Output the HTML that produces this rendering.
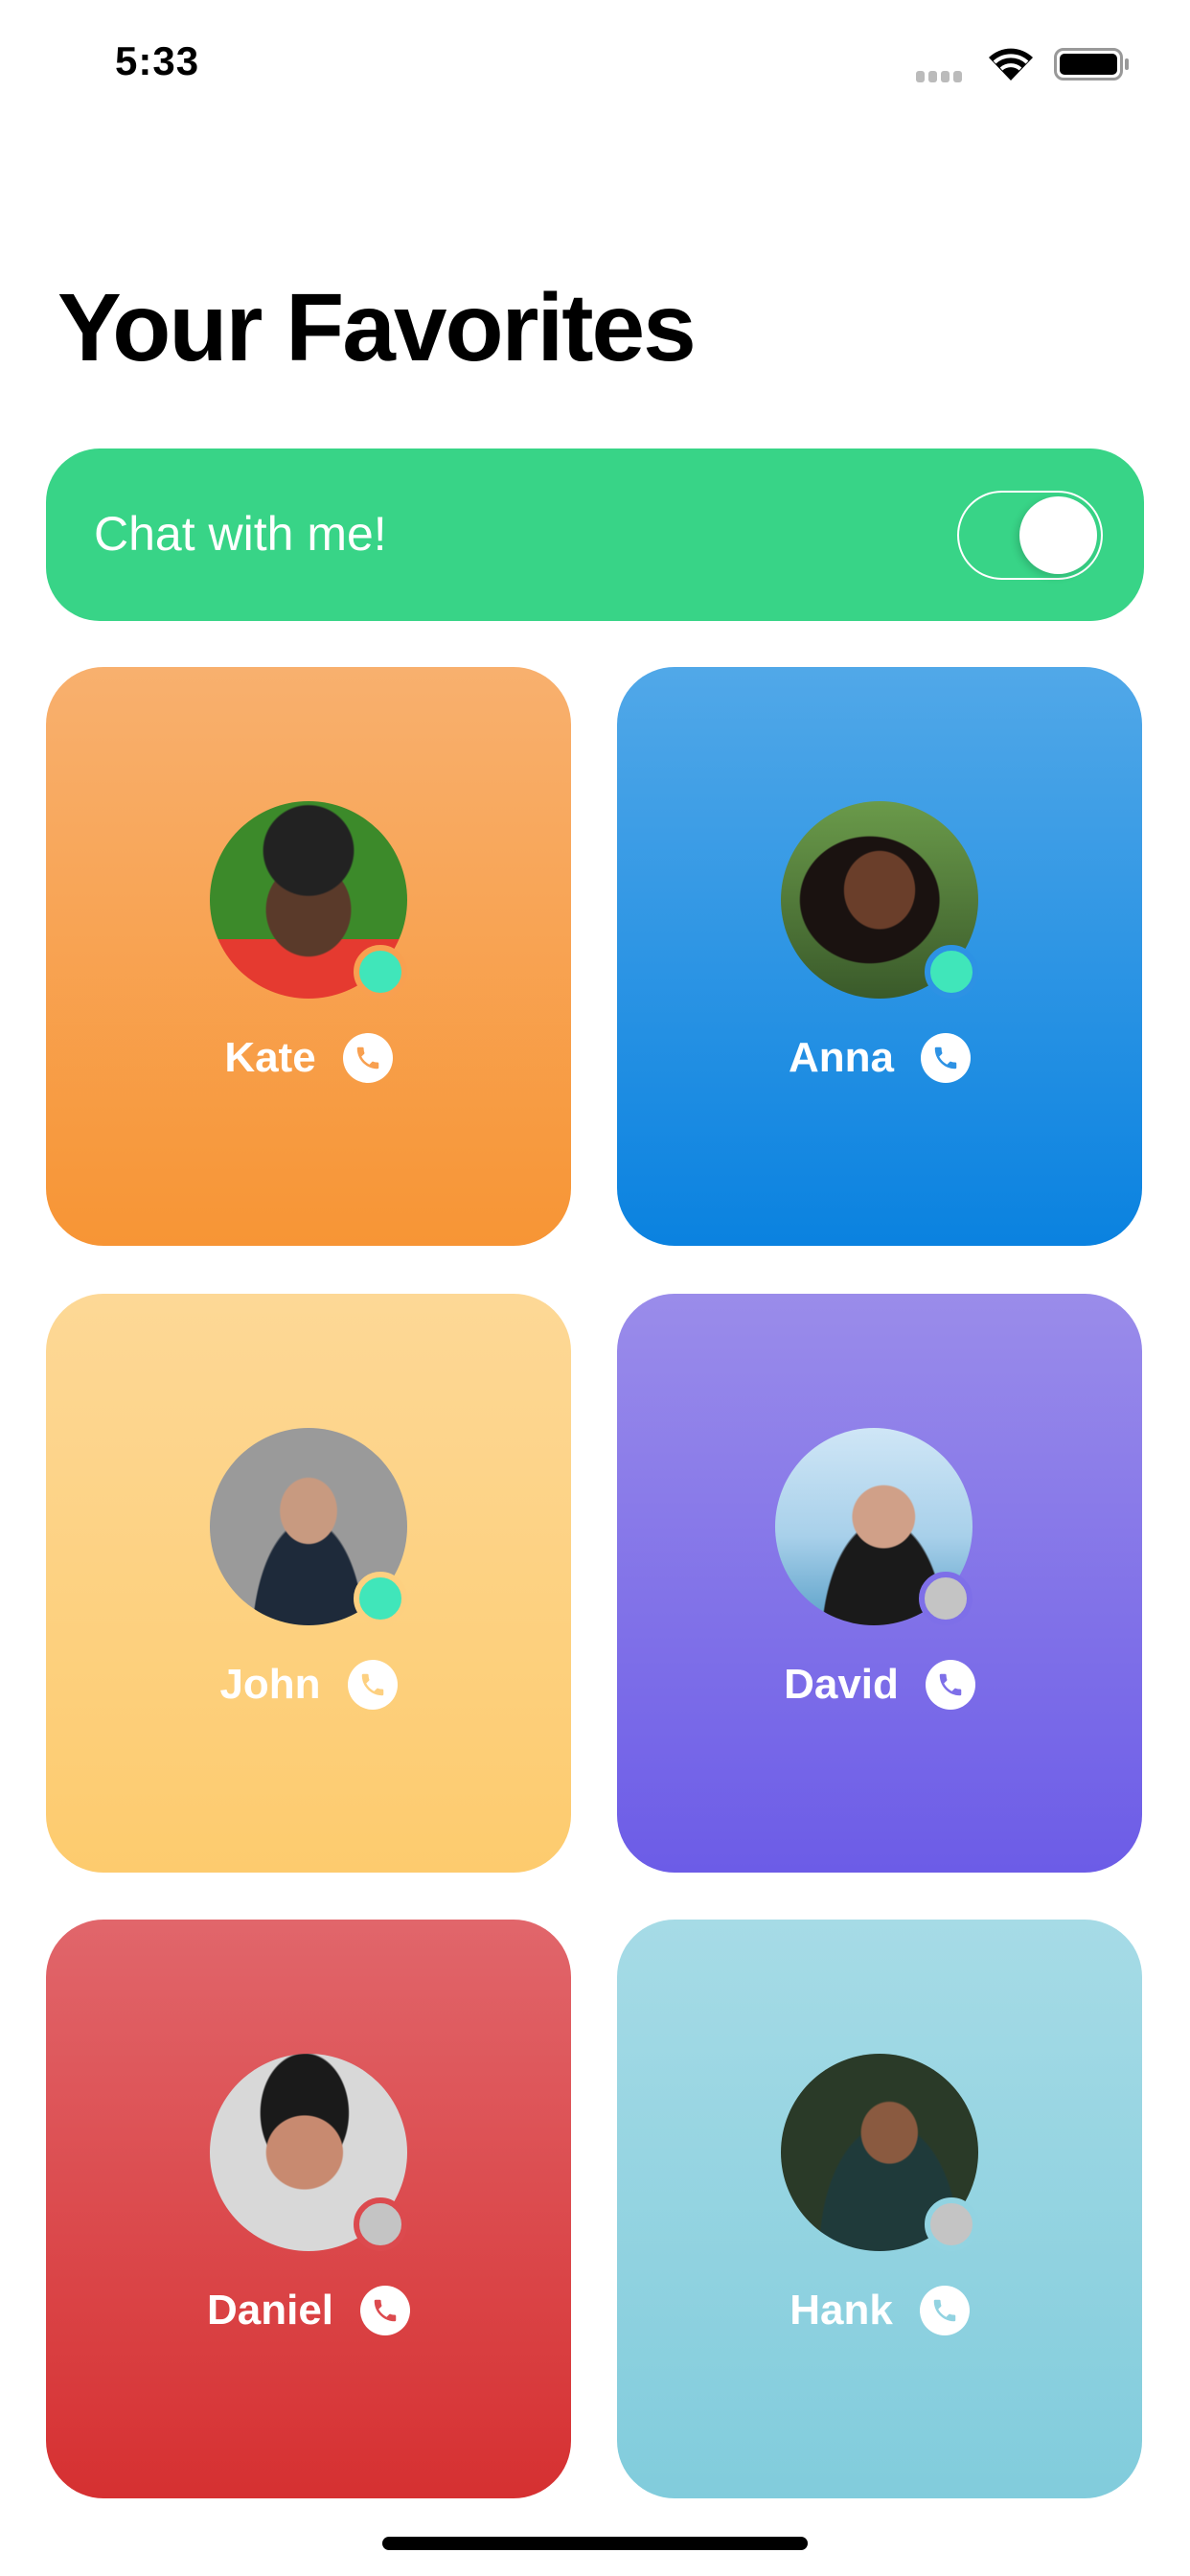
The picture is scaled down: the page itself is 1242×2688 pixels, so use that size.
<!DOCTYPE html>
<html><head><meta charset="utf-8"><style>
*{margin:0;padding:0;box-sizing:border-box}
body{width:1242px;height:2688px;background:#fff;position:relative;overflow:hidden;font-family:"Liberation Sans",sans-serif}
.abs{position:absolute}
.card{position:absolute;width:548px;height:604px;border-radius:60px}
.av{position:absolute;left:171px;top:140px;width:206px;height:206px;border-radius:50%;overflow:hidden}
.dot{position:absolute;left:321px;top:290px;width:56px;height:56px;border-radius:50%}
.row{position:absolute;left:0;right:0;top:378px;height:60px;display:flex;justify-content:center;align-items:center;gap:28px;color:#fff;font-size:44px;font-weight:bold}
.ph{width:52px;height:52px;border-radius:50%;background:#fff;display:flex;align-items:center;justify-content:center}
</style></head><body>
<div class="abs" style="left:120px;top:40px;font-size:42px;font-weight:bold;letter-spacing:1px">5:33</div>
<div class="abs" style="left:956px;top:74px;display:flex;gap:4px"><i style="width:9px;height:12px;background:#bbb;border-radius:3px;display:block"></i><i style="width:9px;height:12px;background:#bbb;border-radius:3px;display:block"></i><i style="width:9px;height:12px;background:#bbb;border-radius:3px;display:block"></i><i style="width:9px;height:12px;background:#bbb;border-radius:3px;display:block"></i></div>
<svg class="abs" style="left:1030px;top:48px" width="50" height="38" viewBox="0 0 50 38"><path d="M25 36 L2 12 A33 33 0 0 1 48 12 Z" fill="#000"/><path d="M8 17 A25 25 0 0 1 42 17" stroke="#fff" stroke-width="4" fill="none"/><path d="M15 24 A15 15 0 0 1 35 24" stroke="#fff" stroke-width="4" fill="none"/></svg>
<div class="abs" style="left:1100px;top:50px;width:72px;height:34px;border:3px solid #999;border-radius:10px;padding:3px"><div style="width:100%;height:100%;background:#000;border-radius:5px"></div></div>
<div class="abs" style="left:1174px;top:61px;width:4px;height:12px;background:#999;border-radius:2px"></div>
<div class="abs" style="left:60px;top:285px;font-size:100px;font-weight:bold;letter-spacing:-2px">Your Favorites</div>
<div class="abs" style="left:48px;top:468px;width:1146px;height:180px;border-radius:56px;background:#38D487">
<div class="abs" style="left:50px;top:60px;color:#fff;font-size:50px">Chat with me!</div>
<div class="abs" style="left:951px;top:44px;width:152px;height:93px;border:2px solid #fff;border-radius:47px"><div class="abs" style="right:4px;top:4px;width:81px;height:81px;border-radius:50%;background:#fff;box-shadow:-3px 3px 8px rgba(0,0,0,.15)"></div></div>
</div>

<div class="card" style="left:48px;top:696px;background:linear-gradient(#F8B06E,#F79535)">
<div class="av" style="background:radial-gradient(circle at 50% 25%,#222 0 25%,transparent 26%),radial-gradient(ellipse at 50% 55%,#5a3a2a 0 30%,transparent 31%),linear-gradient(#3c8a2a 0 70%,#e53a30 70%)"></div>
<div class="dot" style="background:#40E6BA;border:6px solid #F8A050"></div>
<div class="row">Kate<div class="ph"><svg width="30" height="30" viewBox="0 0 24 24"><path d="M6.6 10.8c1.4 2.8 3.8 5.1 6.6 6.6l2.2-2.2c.3-.3.7-.4 1-.2 1.1.4 2.3.6 3.6.6.6 0 1 .4 1 1V20c0 .6-.4 1-1 1C10.6 21 3 13.4 3 4c0-.6.4-1 1-1h3.5c.6 0 1 .4 1 1 0 1.3.2 2.5.6 3.6.1.3 0 .7-.2 1L6.6 10.8z" fill="#F8A050"/></svg></div></div>
</div>

<div class="card" style="left:644px;top:696px;background:linear-gradient(#51A8E8,#0A82E0)">
<div class="av" style="background:radial-gradient(ellipse at 50% 45%,#6a3e2a 0 25%,transparent 26%),radial-gradient(ellipse at 45% 50%,#1a1210 0 45%,transparent 46%),linear-gradient(#6a9a4a,#3a5a2a)"></div>
<div class="dot" style="background:#40E6BA;border:6px solid #2D92E4"></div>
<div class="row">Anna<div class="ph"><svg width="30" height="30" viewBox="0 0 24 24"><path d="M6.6 10.8c1.4 2.8 3.8 5.1 6.6 6.6l2.2-2.2c.3-.3.7-.4 1-.2 1.1.4 2.3.6 3.6.6.6 0 1 .4 1 1V20c0 .6-.4 1-1 1C10.6 21 3 13.4 3 4c0-.6.4-1 1-1h3.5c.6 0 1 .4 1 1 0 1.3.2 2.5.6 3.6.1.3 0 .7-.2 1L6.6 10.8z" fill="#2D92E4"/></svg></div></div>
</div>

<div class="card" style="left:48px;top:1350px;background:linear-gradient(#FDD896,#FDCB6E)">
<div class="av" style="background:radial-gradient(ellipse at 50% 42%,#c89a80 0 20%,transparent 21%),radial-gradient(ellipse at 50% 110%,#1e2a3a 0 40%,transparent 41%),#9a9a9a"></div>
<div class="dot" style="background:#40E6BA;border:6px solid #FDD080"></div>
<div class="row">John<div class="ph"><svg width="30" height="30" viewBox="0 0 24 24"><path d="M6.6 10.8c1.4 2.8 3.8 5.1 6.6 6.6l2.2-2.2c.3-.3.7-.4 1-.2 1.1.4 2.3.6 3.6.6.6 0 1 .4 1 1V20c0 .6-.4 1-1 1C10.6 21 3 13.4 3 4c0-.6.4-1 1-1h3.5c.6 0 1 .4 1 1 0 1.3.2 2.5.6 3.6.1.3 0 .7-.2 1L6.6 10.8z" fill="#FDD080"/></svg></div></div>
</div>

<div class="card" style="left:644px;top:1350px;background:linear-gradient(#9A8CEA,#6C5CE7)">
<div class="av" style="left:165px;background:radial-gradient(ellipse at 55% 45%,#d0a088 0 20%,transparent 21%),radial-gradient(ellipse at 55% 110%,#1a1a1a 0 40%,transparent 41%),linear-gradient(#cfe6f6,#a8d0ea 55%,#5aa0c8)"></div>
<div class="dot" style="left:315px;background:#c4c4c4;border:6px solid #7E6FE8"></div>
<div class="row">David<div class="ph"><svg width="30" height="30" viewBox="0 0 24 24"><path d="M6.6 10.8c1.4 2.8 3.8 5.1 6.6 6.6l2.2-2.2c.3-.3.7-.4 1-.2 1.1.4 2.3.6 3.6.6.6 0 1 .4 1 1V20c0 .6-.4 1-1 1C10.6 21 3 13.4 3 4c0-.6.4-1 1-1h3.5c.6 0 1 .4 1 1 0 1.3.2 2.5.6 3.6.1.3 0 .7-.2 1L6.6 10.8z" fill="#7E6FE8"/></svg></div></div>
</div>

<div class="card" style="left:48px;top:2003px;background:linear-gradient(#E1666B,#D63031)">
<div class="av" style="background:radial-gradient(ellipse at 48% 50%,#c88a70 0 26%,transparent 27%),radial-gradient(ellipse at 48% 30%,#1a1a1a 0 30%,transparent 31%),#d8d8d8"></div>
<div class="dot" style="background:#c4c4c4;border:6px solid #DC4A4E"></div>
<div class="row">Daniel<div class="ph"><svg width="30" height="30" viewBox="0 0 24 24"><path d="M6.6 10.8c1.4 2.8 3.8 5.1 6.6 6.6l2.2-2.2c.3-.3.7-.4 1-.2 1.1.4 2.3.6 3.6.6.6 0 1 .4 1 1V20c0 .6-.4 1-1 1C10.6 21 3 13.4 3 4c0-.6.4-1 1-1h3.5c.6 0 1 .4 1 1 0 1.3.2 2.5.6 3.6.1.3 0 .7-.2 1L6.6 10.8z" fill="#DC4A4E"/></svg></div></div>
</div>

<div class="card" style="left:644px;top:2003px;background:linear-gradient(#A6DBE6,#81CCDC)">
<div class="av" style="background:radial-gradient(ellipse at 55% 40%,#8a5a40 0 18%,transparent 19%),radial-gradient(ellipse at 55% 100%,#1f3a3a 0 45%,transparent 46%),#2a3a28"></div>
<div class="dot" style="background:#c4c4c4;border:6px solid #92D3E1"></div>
<div class="row">Hank<div class="ph"><svg width="30" height="30" viewBox="0 0 24 24"><path d="M6.6 10.8c1.4 2.8 3.8 5.1 6.6 6.6l2.2-2.2c.3-.3.7-.4 1-.2 1.1.4 2.3.6 3.6.6.6 0 1 .4 1 1V20c0 .6-.4 1-1 1C10.6 21 3 13.4 3 4c0-.6.4-1 1-1h3.5c.6 0 1 .4 1 1 0 1.3.2 2.5.6 3.6.1.3 0 .7-.2 1L6.6 10.8z" fill="#92D3E1"/></svg></div></div>
</div>

<div class="abs" style="left:399px;top:2647px;width:444px;height:14px;border-radius:7px;background:#000"></div>
</body></html>
